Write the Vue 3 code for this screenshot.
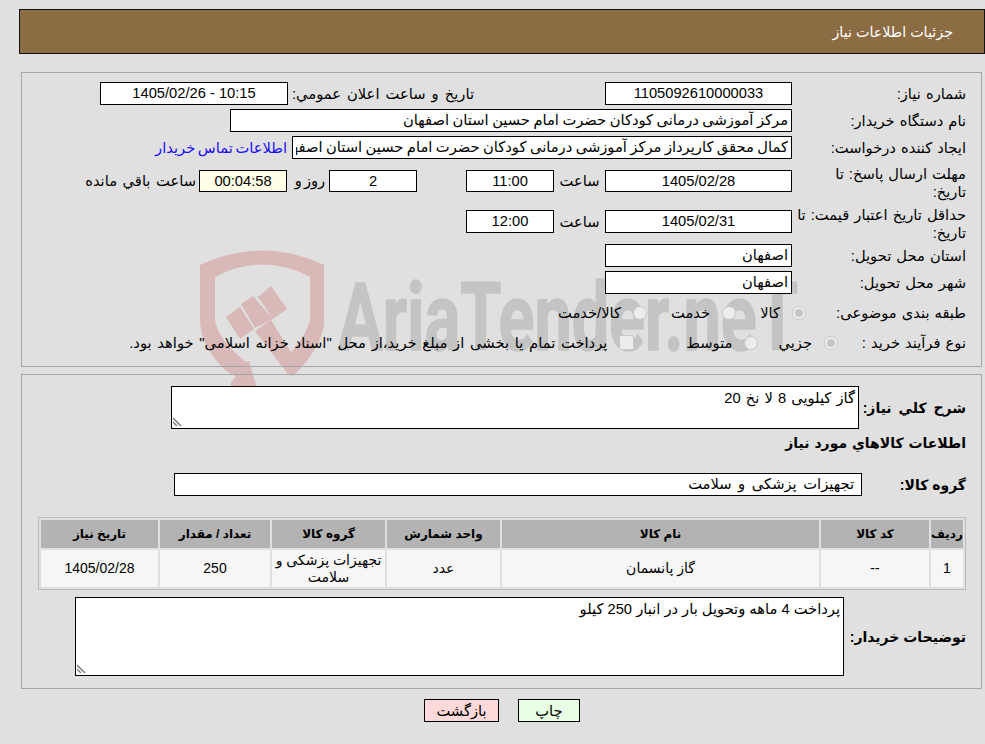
<script setup>
const rows = [
  { id: 1, code: '--', name: 'گاز پانسمان', unit: 'عدد', group: 'تجهیزات پزشکی و سلامت', qty: '250', date: '1405/02/28' }
]
const heads = ['ردیف', 'کد کالا', 'نام کالا', 'واحد شمارش', 'گروه کالا', 'تعداد / مقدار', 'تاریخ نیاز']
</script>

<template>
  <div class="page" dir="rtl">
    <svg class="mark" viewBox="190 240 620 160" width="620" height="160" aria-hidden="true">
      <path class="pink" d="M200 265 Q262 236 324 265 L324 325 Q320 350 293 376 L281 362 Q305 340 310 320 L310 277 Q262 252 215 277 L215 320 Q218 340 246 362 L249 361 L257 388 L231 388 L231 382 L236 377 L225 370 Q200 345 200 320 Z"/>
      <path class="pink" d="M226 317 L240 307 L254 329 L240 339 Z M241 304 L253 296 L273 319 L255 328 Z M258 297 L271 286 L287 309 L273 319 Z M255 331 L271 320 L300 367 L293 376 L287 373 Z"/>
      <text x="338" y="350" class="wm" textLength="460" lengthAdjust="spacingAndGlyphs">AriaTender.neT</text>
    </svg>

    <header class="title">جزئیات اطلاعات نیاز</header>

    <section class="panel top">
      <div class="row r1">
        <label class="lb">شماره نیاز:</label>
        <div class="box w187 c">1105092610000033</div>
        <span class="pub">تاریخ و ساعت اعلان عمومي:</span>
        <div class="box w188 c">10:15 - 1405/02/26</div>
      </div>
      <div class="row r2">
        <label class="lb">نام دستگاه خریدار:</label>
        <div class="box w562 tight">مرکز آموزشی درمانی کودکان حضرت امام حسین استان اصفهان</div>
      </div>
      <div class="row r3">
        <label class="lb">ایجاد کننده درخواست:</label>
        <div class="box w500"><span class="clip tight">کمال محقق کارپرداز مرکز آموزشی درمانی کودکان حضرت امام حسین استان اصفهان</span></div>
        <a class="link">اطلاعات تماس خریدار</a>
      </div>
      <div class="row r4">
        <label class="lb two">مهلت ارسال پاسخ: تا<br>تاریخ:</label>
        <div class="box w187 c">1405/02/28</div>
        <span class="sa">ساعت</span>
        <div class="box w88 c">11:00</div>
        <span class="gap49"></span>
        <div class="box w88 c">2</div>
        <span class="day">روز و</span>
        <div class="box w88 c warm">00:04:58</div>
        <span class="left">ساعت باقي مانده</span>
      </div>
      <div class="row r5">
        <label class="lb two">حداقل تاریخ اعتبار قیمت: تا<br>تاریخ:</label>
        <div class="box w187 c">1405/02/31</div>
        <span class="sa">ساعت</span>
        <div class="box w88 c">12:00</div>
      </div>
      <div class="row r6">
        <label class="lb">استان محل تحویل:</label>
        <div class="box w187">اصفهان</div>
      </div>
      <div class="row r7">
        <label class="lb">شهر محل تحویل:</label>
        <div class="box w187">اصفهان</div>
      </div>
      <div class="row r8">
        <label class="lb lb8">طبقه بندی موضوعی:</label>
        <span class="opt"><i class="radio on"></i><span>کالا</span></span>
        <span class="opt o2"><i class="radio"></i><span>خدمت</span></span>
        <span class="opt o3"><i class="radio"></i><span>کالا/خدمت</span></span>
      </div>
      <div class="row r9">
        <label class="lb lb9">نوع فرآیند خرید :</label>
        <span class="opt"><i class="radio on"></i><span>جزیي</span></span>
        <span class="opt p2"><i class="radio"></i><span>متوسط</span></span>
        <span class="opt p3"><i class="check"></i><span class="long">پرداخت تمام یا بخشی از مبلغ خرید،از محل "اسناد خزانه اسلامی" خواهد بود.</span></span>
      </div>
    </section>

    <section class="panel bottom">
      <div class="field">
        <label class="blb b1">شرح کلي نیاز:</label>
        <div class="area a1">گاز کیلویی 8 لا نخ 20
          <svg class="grip" viewBox="0 0 9 9"><path d="M0 1 L8 9 M0 5 L4 9"/></svg>
        </div>
      </div>
      <h3 class="sub">اطلاعات کالاهاي مورد نیاز</h3>
      <div class="field group">
        <label class="blb b2">گروه کالا:</label>
        <div class="box gbox">تجهیزات پزشکی و سلامت</div>
      </div>
      <table class="grid">
        <thead>
          <tr><th v-for="h in heads" :key="h">{{ h }}</th></tr>
        </thead>
        <tbody>
          <tr v-for="r in rows" :key="r.id">
            <td>{{ r.id }}</td><td>{{ r.code }}</td><td>{{ r.name }}</td><td>{{ r.unit }}</td><td>{{ r.group }}</td><td>{{ r.qty }}</td><td>{{ r.date }}</td>
          </tr>
        </tbody>
      </table>
      <div class="field notes">
        <label class="blb b3">توضیحات خریدار:</label>
        <div class="area a2">پرداخت 4 ماهه وتحویل بار در انبار 250 کیلو
          <svg class="grip" viewBox="0 0 9 9"><path d="M0 1 L8 9 M0 5 L4 9"/></svg>
        </div>
      </div>
    </section>

    <div class="actions">
      <button class="btn back">بازگشت</button>
      <button class="btn print">چاپ</button>
    </div>
  </div>
</template>

<style>
html, body { margin: 0; background: #e0e0e0; }
</style>

<style scoped>
.page {
  position: relative; width: 985px; height: 744px; box-sizing: border-box; overflow: hidden;
  background: #e0e0e0; color: #000; padding-top: 9px;
  font: 14.7px/18px "Liberation Sans", "DejaVu Sans", sans-serif;
}
.mark { position: absolute; left: 190px; top: 240px; pointer-events: none; direction: ltr; }
.pink { fill: #d9b8b8; }
.wm { font: 700 94px Roboto, sans-serif; fill: #c4c4c4; stroke: #c4c4c4; stroke-width: 1.5px; direction: ltr; }
.title {
  box-sizing: border-box; height: 45px; margin-left: 19px; width: 966px;
  background: #8c6c43; border: 1px solid #111; color: #fff; font-size: 14.3px;
  padding-right: 31px; line-height: 44px;
}
.panel {
  position: relative; box-sizing: border-box; width: 961px; margin-right: 3px;
  border: 1px solid #a6a6a6;
}
.top { height: 295px; margin-top: 18px; padding-top: 9px; }
.bottom { height: 315px; margin-top: 7px; padding-top: 11px; }
.row { display: flex; align-items: center; height: 23px; margin-bottom: 4px; }
.r3 { margin-bottom: 11px; }
.r4 { height: 22px; margin-bottom: 18px; }
.r5 { margin-bottom: 11px; }
.r7, .r8 { margin-bottom: 7px; }
.lb { width: 174px; margin-right: 15px; flex: none; white-space: nowrap; word-spacing: 1px; }
.two { margin-top: 4px; }
.lb8 { width: 160px; }
.lb9 { width: 128px; }
.box {
  box-sizing: border-box; height: 23px; line-height: 21px; background: #fff;
  border: 1px solid #000; padding: 0 3px; white-space: nowrap; flex: none;
}
.r4 .box { height: 22px; line-height: 20px; }
.c { text-align: center; }
.w187 { width: 187px; }
.w188 { width: 188px; }
.w562 { width: 562px; }
.w500 { width: 500px; }
.w88 { width: 88px; }
.tight { word-spacing: -0.6px; }
.clip { display: block; overflow: hidden; }
.warm { background: #ffffe8; }
.pub { margin-right: 131px; width: 186px; flex: none; white-space: nowrap; word-spacing: 2px; }
.link { color: #1a0dff; margin-right: 5px; white-space: nowrap; word-spacing: -1.5px; }
.sa { width: 51px; text-align: center; flex: none; }
.gap49 { width: 49px; flex: none; }
.day { box-sizing: border-box; width: 42px; padding-left: 4px; text-align: center; flex: none; word-spacing: -2px; }
.left { margin-right: 3px; white-space: nowrap; word-spacing: 1.5px; }
.opt { display: inline-flex; align-items: center; gap: 12px; white-space: nowrap; }
.o2, .o3 { margin-right: 24px; }
.p2 { margin-right: 20px; }
.p3 { margin-right: 52px; }
.long { word-spacing: 1.7px; }
.radio {
  position: relative; width: 14px; height: 14px; flex: none; box-sizing: border-box;
  border-radius: 50%; background: #ededed; border: 1px solid #c9c9c9;
}
.radio.on::after { content: ""; position: absolute; inset: 2px; border-radius: 50%; background: #c6c6c6; }
.check { width: 15px; height: 15px; flex: none; box-sizing: border-box; border-radius: 2px; background: #ececec; border: 1px solid #c9c9c9; }
.field { display: flex; align-items: center; }
.blb { flex: none; margin-right: 15px; font-weight: 700; font-size: 14px; white-space: nowrap; }
.b1 { width: 107px; word-spacing: 3px; }
.b2 { width: 104px; }
.b3 { width: 122px; }
.area { position: relative; box-sizing: border-box; background: #fff; border: 1px solid #000; padding: 2px 3px; }
.a1 { width: 688px; height: 43px; word-spacing: 1px; }
.a2 { width: 769px; height: 79px; }
.grip { position: absolute; left: 1px; bottom: 2px; width: 9px; height: 9px; fill: none; stroke: #777; stroke-width: 1.4; }
.sub { margin: 4px 15px 0 0; font-size: 14px; font-weight: 700; line-height: 20px; word-spacing: 1px; }
.group { margin-top: 20px; }
.gbox { width: 688px; padding-right: 7px; word-spacing: 2.5px; }
.grid {
  width: 928px; height: 72px; margin: 21px 15px 0 0; box-sizing: border-box; table-layout: fixed;
  border-collapse: separate; border-spacing: 2px; border: 1px solid #bcbcbc; font-size: 14px;
}
th { height: 28px; padding: 0; background: #b3b3b3; font-weight: 700; font-size: 12px; }
td { height: 37px; padding: 0 2px; background: #f6f6f6; text-align: center; line-height: 17px; }
th:nth-child(1) { width: 32px; }
th:nth-child(2) { width: 108px; }
th:nth-child(3) { width: 317px; }
th:nth-child(4) { width: 113px; }
th:nth-child(5) { width: 113px; }
th:nth-child(6) { width: 110px; }
th:nth-child(7) { width: 117px; }
.notes { margin-top: 7px; }
.actions { display: flex; justify-content: center; gap: 19px; direction: ltr; margin: 10px 0 0 19px; position: relative; }
.btn { box-sizing: border-box; height: 23px; border: 1px solid #000; font: inherit; padding: 0; color: #000; }
.print { width: 62px; background: #e9ffe5; }
.back { width: 75px; background: #ffd9d9; }
</style>
